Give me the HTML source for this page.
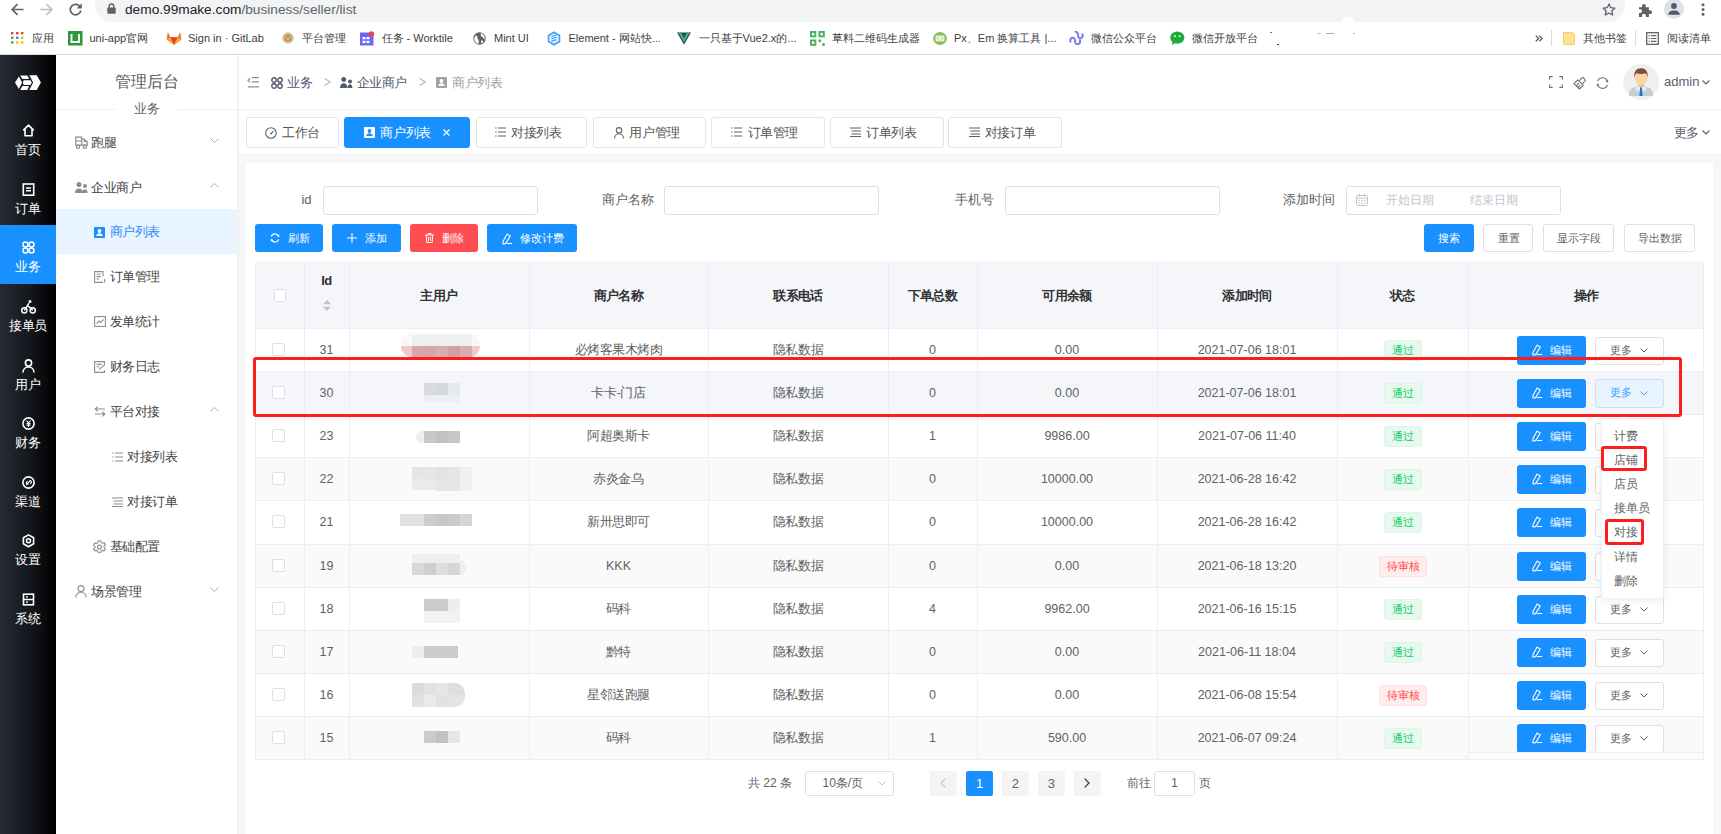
<!DOCTYPE html>
<html><head><meta charset="utf-8">
<style>
*{box-sizing:border-box;margin:0;padding:0}
html,body{width:1721px;height:834px;overflow:hidden;background:#fff;font-family:"Liberation Sans",sans-serif;color:#606266;font-size:13px}
.a{position:absolute}
svg{display:block}
/* chrome */
#top{left:0;top:0;width:1721px;height:22px;background:#fff}
#addr{left:95px;top:-10px;width:1530px;height:32px;background:#f1f3f4;border-radius:16px}
#url{left:125px;top:1px;font-size:13.7px;color:#202124;white-space:nowrap;line-height:18px}
#url span{color:#5f6368}
#bm{left:0;top:22px;width:1721px;height:33px;background:#fff;border-bottom:1px solid #dadce0}
.bmt{position:absolute;top:9px;font-size:11px;line-height:14px;color:#3c4043;white-space:nowrap}
/* dark sidebar */
#side1{left:0;top:55px;width:56px;height:779px;background:linear-gradient(90deg,#272b36 0%,#14161c 55%,#000 100%)}
.m1{position:absolute;left:0;width:56px;height:59px;color:#fff;text-align:center}
.m1 svg{position:absolute;left:22px;top:16px}
.m1 .t{position:absolute;left:0;width:56px;top:34px;font-size:13px;line-height:15px;letter-spacing:-0.45px;text-indent:-0.45px}
.m1.on{background:#1890ff}
/* sidebar 2 */
#side2{left:56px;top:55px;width:182px;height:779px;background:#fff;border-right:1px solid #eff0f2;box-shadow:1px 0 3px rgba(0,0,0,.035);z-index:2}
.m2{position:absolute;left:0;width:181px;height:45px;font-size:13px;letter-spacing:-0.5px;color:#444;line-height:45px;white-space:nowrap}
.m2 .ic{position:absolute;top:16px}
.m2 .tx{position:absolute}
.m2 .chev{position:absolute;left:153.5px;top:18px}
.m2.on{background:#e8f4ff;color:#2b8cf5}
/* main */
#hdr{left:238px;top:55px;width:1483px;height:55px;background:#fff;border-bottom:1px solid #f0f0f0}
#tabs{left:238px;top:110px;width:1483px;height:44px;background:#fff}
.tab{position:absolute;top:7.3px;height:30.5px;border:1px solid #e1e4e8;border-radius:3px;background:#fff;font-size:13px;color:#555;line-height:30px;letter-spacing:-0.4px;white-space:nowrap}

.tab .tx{position:absolute;top:0}
.bc{top:17.8px;font-size:13px;line-height:20px;letter-spacing:-0.55px;white-space:nowrap}
.tab.on{background:#1890ff;border-color:#1890ff;color:#fff}
#gray{left:238px;top:154px;width:1483px;height:680px;background:#f5f7f9;border-top:1px solid #eceef1}
#card{left:246px;top:163px;width:1467px;height:680px;background:#fff}

.lbl{top:192px;font-size:13px;line-height:16px;text-align:right;color:#606266;white-space:nowrap}
.inp{top:186px;height:29px;border:1px solid #dcdfe6;border-radius:3px;background:#fff}
.ph{top:192px;font-size:12px;line-height:16px;color:#c0c4cc;white-space:nowrap}
.btn{top:223.8px;height:28.4px;border-radius:3px;font-size:11px;white-space:nowrap}
.btn .bt{top:0;line-height:28.2px}
.btn.pri{background:#1890ff;color:#fff}
.btn.dan{background:#ff4d51;color:#fff}
.btn.def{background:#fff;border:1px solid #dcdfe6;color:#606266}
.btn.def .bt{line-height:26px;margin-left:-1px}
.hl{left:255px;width:1449px;height:1px;background:#ebeef5}
.vl{top:262px;width:1px;height:498px;background:#ebeef5}
.th{font-size:13px;letter-spacing:-0.6px;font-weight:bold;color:#303133;text-align:center;line-height:20px;white-space:nowrap}
.tdc{letter-spacing:-0.45px;font-size:13px!important}
.td{font-size:12.5px;color:#606266;text-align:center;line-height:20px;white-space:nowrap}
.cb{width:12.6px;height:12.6px;border:1px solid #dcdfe6;border-radius:2px;background:#fff}
.tag{height:21px;border-radius:3px;font-size:11px;line-height:19px;text-align:center;border:1px solid}
.tag.ok{background:#e7f8ee;border-color:#dcf5e6;color:#13ce66}
.tag.wait{background:#ffeded;border-color:#ffe0e0;color:#ff4949}
.more{width:68.5px;height:28.5px;border:1px solid #dcdfe6;border-radius:3px;background:#fff;font-size:11px;line-height:25px;color:#606266;padding-left:13.5px}
.more.hov{background:#e8f3fe;border-color:#c4e0fd;color:#409eff}

.dd{font-size:12px;line-height:16px;color:#606266;white-space:nowrap}
.pg{font-size:12px;line-height:16px;color:#606266;white-space:nowrap}
.pgb{top:770.5px;width:27px;height:25.5px;border-radius:2px;font-size:13px;line-height:25.5px;text-align:center}
</style></head>
<body>
<!-- browser chrome -->
<div id="top" class="a"></div>
<div id="addr" class="a"></div>
<div class="a" style="left:1341px;top:17px;width:13px;height:10px;border-radius:50%;background:#fff"></div>
<div id="url" class="a">demo.99make.com<span>/business/seller/list</span></div>
<div id="bm" class="a"></div>
<div id="bmw" class="a" style="left:0;top:22px">
<div class="bmt" style="left:32px">应用</div>
<div class="bmt" style="left:89.5px">uni-app官网</div>
<div class="bmt" style="left:188px">Sign in · GitLab</div>
<div class="bmt" style="left:302px">平台管理</div>
<div class="bmt" style="left:381.5px">任务 - Worktile</div>
<div class="bmt" style="left:494px">Mint UI</div>
<div class="bmt" style="left:568.5px">Element - 网站快...</div>
<div class="bmt" style="left:698.5px">一只基于Vue2.x的...</div>
<div class="bmt" style="left:832px">草料二维码生成器</div>
<div class="bmt" style="left:954px">Px、Em 换算工具 |...</div>
<div class="bmt" style="left:1091px">微信公众平台</div>
<div class="bmt" style="left:1191.5px">微信开放平台</div>
<div class="bmt" style="left:1582.5px">其他书签</div>
<div class="bmt" style="left:1666.5px">阅读清单</div>
</div>


<!-- toolbar icons -->
<svg class="a" style="left:10px;top:2px" width="15" height="15" viewBox="0 0 15 15"><path d="M13.5 7.5H2.5M7.5 2.2L2.2 7.5l5.3 5.3" fill="none" stroke="#5f6368" stroke-width="1.7"/></svg>
<svg class="a" style="left:39px;top:2px" width="15" height="15" viewBox="0 0 15 15"><path d="M1.5 7.5h11M7.5 2.2l5.3 5.3-5.3 5.3" fill="none" stroke="#bdc1c6" stroke-width="1.7"/></svg>
<svg class="a" style="left:68px;top:2px" width="15" height="15" viewBox="0 0 15 15"><path d="M12.3 5.2A5.3 5.3 0 1 0 12.8 8.5" fill="none" stroke="#5f6368" stroke-width="1.7"/><path d="M13.8 1.2v5.3H8.5z" fill="#5f6368"/></svg>
<svg class="a" style="left:107px;top:3px" width="9" height="11" viewBox="0 0 9 11"><rect x="0.3" y="4.6" width="8.4" height="6.2" rx="1" fill="#5f6368"/><path d="M2.2 5V3.3a2.3 2.3 0 0 1 4.6 0V5" fill="none" stroke="#5f6368" stroke-width="1.4"/></svg>
<svg class="a" style="left:1602px;top:3px" width="14" height="13" viewBox="0 0 14 13"><path d="M7 .9l1.75 3.8 4.1.45-3.05 2.8.85 4.05L7 9.95 3.35 12l.85-4.05-3.05-2.8 4.1-.45z" fill="none" stroke="#5f6368" stroke-width="1.3" stroke-linejoin="round"/></svg>
<svg class="a" style="left:1638px;top:2.5px" width="14" height="14" viewBox="0 0 14 14"><path d="M1 4.3h3V3a1.9 1.9 0 0 1 3.8 0v1.3h3.1v3h1.2a1.9 1.9 0 0 1 0 3.8h-1.2v2.8H7.8v-1.2a1.9 1.9 0 0 0-3.8 0v1.2H1V10h1.2a1.9 1.9 0 0 0 0-3.8H1z" fill="#5f6368"/></svg>
<div class="a" style="left:1664px;top:-1px;width:20px;height:20px;border-radius:50%;background:#dee1e6"></div>
<svg class="a" style="left:1667px;top:3px" width="14" height="12" viewBox="0 0 14 12"><circle cx="7" cy="3" r="2.9" fill="#4f5b6e"/><path d="M1.2 11.8c0-3 2.8-4.4 5.8-4.4s5.8 1.4 5.8 4.4z" fill="#4f5b6e"/></svg>
<svg class="a" style="left:1701px;top:3px" width="4" height="13" viewBox="0 0 4 13"><circle cx="2" cy="1.8" r="1.5" fill="#5f6368"/><circle cx="2" cy="6.5" r="1.5" fill="#5f6368"/><circle cx="2" cy="11.2" r="1.5" fill="#5f6368"/></svg>
<!-- bookmark icons -->
<svg class="a" style="left:11px;top:31.5px" width="13" height="12" viewBox="0 0 13 12"><g><rect x="0" y="0" width="2.4" height="2.4" fill="#ea4335"/><rect x="5" y="0" width="2.4" height="2.4" fill="#ea4335"/><rect x="10" y="0" width="2.4" height="2.4" fill="#ea4335"/><rect x="0" y="4.6" width="2.4" height="2.4" fill="#34a853"/><rect x="5" y="4.6" width="2.4" height="2.4" fill="#4285f4"/><rect x="10" y="4.6" width="2.4" height="2.4" fill="#fbbc04"/><rect x="0" y="9.2" width="2.4" height="2.4" fill="#34a853"/><rect x="5" y="9.2" width="2.4" height="2.4" fill="#fbbc04"/><rect x="10" y="9.2" width="2.4" height="2.4" fill="#fbbc04"/></g></svg>
<svg class="a" style="left:68px;top:30.5px" width="15" height="15" viewBox="0 0 15 15"><rect width="14.5" height="14.5" fill="#2b9939"/><path d="M3.5 3v8h7.5V3" fill="none" stroke="#fff" stroke-width="1.9"/></svg>
<svg class="a" style="left:166px;top:31px" width="16" height="14" viewBox="0 0 16 14"><path d="M8 13.8L.6 8.4 1.9 1l2.4 5.2h7.4L14.1 1l1.3 7.4z" fill="#fc6d26"/><path d="M8 13.8L4.3 6.2h7.4z" fill="#e24329"/><path d="M.6 8.4L4.3 6.2 8 13.8zM15.4 8.4l-3.7-2.2L8 13.8z" fill="#fca326"/></svg>
<svg class="a" style="left:282px;top:32px" width="12" height="12" viewBox="0 0 12 12"><circle cx="6" cy="6" r="5.8" fill="#d9c39a"/><circle cx="6" cy="6" r="3.6" fill="#b8904e"/><path d="M3.8 4.6l2.2 3 2.2-3" fill="none" stroke="#f3e3b8" stroke-width="1"/></svg>
<svg class="a" style="left:360px;top:30.5px" width="15" height="15" viewBox="0 0 15 15"><rect x="0" y="1.5" width="13.5" height="13" fill="#6b67f4"/><rect x="2.5" y="6" width="3" height="2.3" fill="#fff"/><rect x="6.5" y="6" width="3" height="2.3" fill="#fff"/><rect x="2.5" y="9.8" width="3" height="2.3" fill="#fff"/><rect x="6.5" y="9.8" width="3" height="2.3" fill="#fff"/><circle cx="11.5" cy="2.8" r="2.6" fill="#f0413f"/></svg>
<svg class="a" style="left:473px;top:31.5px" width="13" height="13" viewBox="0 0 13 13"><circle cx="6.5" cy="6.5" r="6.2" fill="#5f6368"/><path d="M2.3 3.6c1.6.2 2.4 1.2 2.2 2.5-.2 1 .7 1.5 1.2 2.4.4.8-.3 2-.1 3.6-2.6-.6-4.2-2.6-4.4-5zM8 1c.2 1.2-.4 1.7-.2 2.7.3 1 1.6.9 2.4 1.8.7.7.4 1.6 1.8 1.9 0-2.6-1.6-5.4-4-6.4zM8.2 8.6c.9-.2 1.7.2 2.3 1.1-.6.7-1.3 1.3-2.3 1.7.3-1-.6-1.6 0-2.8z" fill="#fff"/></svg>
<svg class="a" style="left:547px;top:31px" width="14" height="15" viewBox="0 0 14 15"><path d="M7 .3l6.3 3.6v7.2L7 14.7.7 11.1V3.9z" fill="#409eff"/><path d="M7 2.2l4.7 2.7v5.2L7 12.8 2.3 10.1V4.9z" fill="#dbeeff"/><path d="M4.5 5.5l4.8-1.5M4.5 7.8l4.8-1.5M4.5 10.1l4.8-1.5" stroke="#409eff" stroke-width="1.2"/></svg>
<svg class="a" style="left:677px;top:31.5px" width="14" height="13" viewBox="0 0 14 13"><path d="M0 .5h14L7 12.8z" fill="#35495e"/><path d="M2.6 .5L7 8.2 11.4.5" fill="none" stroke="#41b883" stroke-width="2"/><path d="M4.7 .8h4.6L7 4.7z" fill="#fff" opacity=".0"/></svg>
<svg class="a" style="left:810px;top:31px" width="15" height="15" viewBox="0 0 15 15"><g fill="#41b35d"><rect x="0" y="0" width="6.3" height="6.3"/><rect x="8.5" y="0" width="6.3" height="6.3"/><rect x="0" y="8.5" width="6.3" height="6.3"/><rect x="8.5" y="8.5" width="2.6" height="2.6"/><rect x="12.2" y="12.2" width="2.6" height="2.6"/></g><g fill="#fff"><rect x="1.9" y="1.9" width="2.5" height="2.5"/><rect x="10.4" y="1.9" width="2.5" height="2.5"/><rect x="1.9" y="10.4" width="2.5" height="2.5"/></g></svg>
<svg class="a" style="left:933px;top:31.5px" width="14" height="13" viewBox="0 0 14 13"><ellipse cx="7" cy="6.5" rx="6.9" ry="6.4" fill="#87c05a"/><rect x="2.6" y="3.6" width="8.8" height="5.8" rx="1" fill="#e8f3dc"/><path d="M5.5 5.3l-1.2 1.2 1.2 1.2M8.5 5.3l1.2 1.2-1.2 1.2" fill="none" stroke="#87c05a" stroke-width=".8"/></svg>
<svg class="a" style="left:1069px;top:31px" width="15" height="14" viewBox="0 0 15 14"><path d="M2 11.2c-1.4-1.3-.8-3.8 1.2-4.4 1.3-.4 2.4.4 2.6 1.9l.4 2.5c.3 1.6 1.7 2.4 3.1 1.9 2-.7 2.5-3.2 1-4.6" fill="none" stroke="#7b7bf2" stroke-width="2"/><path d="M13 2.8c1.4 1.3.8 3.8-1.2 4.4-1.3.4-2.4-.4-2.6-1.9L8.8 2.8C8.5 1.2 7.1.4 5.7.9" fill="none" stroke="#7b7bf2" stroke-width="2"/></svg>
<svg class="a" style="left:1170px;top:31px" width="15" height="15" viewBox="0 0 15 15"><ellipse cx="7.3" cy="6.6" rx="7.1" ry="6.1" fill="#1fab3a"/><path d="M2.5 10.8l-.6 3.3 3.6-2.1z" fill="#1fab3a"/><circle cx="5" cy="5.2" r=".9" fill="#fff"/><circle cx="9.6" cy="5.2" r=".9" fill="#fff"/></svg>
<svg class="a" style="left:1534.5px;top:35px" width="8" height="7" viewBox="0 0 8 7"><path d="M.8.8l2.8 2.7L.8 6.2M4.3.8l2.8 2.7-2.8 2.7" fill="none" stroke="#5f6368" stroke-width="1.4"/></svg>
<div class="a" style="left:1551px;top:30px;width:1px;height:16px;background:#dadce0"></div>
<svg class="a" style="left:1563px;top:31.5px" width="12" height="13" viewBox="0 0 12 13"><path d="M.5 .5h9l2 2v10H.5z" fill="#fde293" stroke="#f2c94c" stroke-width=".8"/></svg>
<div class="a" style="left:1635px;top:30px;width:1px;height:16px;background:#dadce0"></div>
<svg class="a" style="left:1645.5px;top:31.5px" width="13" height="13" viewBox="0 0 13 13"><rect x=".7" y=".7" width="11.6" height="11.6" fill="none" stroke="#5f6368" stroke-width="1.3"/><path d="M2.6 3.7h1.2M5 3.7h5.4M2.6 6.5h1.2M5 6.5h5.4M2.6 9.3h1.2M5 9.3h5.4" stroke="#5f6368" stroke-width="1.2"/></svg>

<div class="a" style="left:1270px;top:32px;width:2px;height:1px;background:#777"></div><div class="a" style="left:1277px;top:44px;width:2px;height:1px;background:#444"></div><div class="a" style="left:1325.5px;top:33px;width:8px;height:1px;background:#aaa"></div><div class="a" style="left:1317px;top:33px;width:4px;height:1px;background:#c8c8d0"></div><div class="a" style="left:1353px;top:33px;width:2px;height:1px;background:#d9a0c0"></div>
<!-- dark side -->

<div id="side1" class="a">
<svg class="a" style="left:14.6px;top:20px" width="27" height="16" viewBox="0 0 27 16"><g fill="#fff"><path d="M0 7.6L3.9 1.4 7.1 7.6 3.9 14z"/><path d="M5.2.4h7.2l1.8 3.7H7.4z"/><path d="M8.6 5.2h6.9l1.3 2.35-1.3 2.35H8.6L7.9 7.55z"/><path d="M7.4 11h6.8l-1.8 3.9H5.2z"/><path d="M14.3.2h7.5l4.1 7.35-4.1 7.35h-7.5l3.8-7.35z"/></g></svg>
<div class="m1" style="top:53.2px"><svg width="13" height="13" viewBox="0 0 13 13" style="left:21.5px"><path d="M1.2 6.3L6.5 1.2l5.3 5.1M3 5v6.8h7V5" fill="none" stroke="#fff" stroke-width="1.6" stroke-linejoin="round"/></svg><div class="t">首页</div></div>
<div class="m1" style="top:111.8px"><svg width="13" height="13" viewBox="0 0 13 13" style="left:21.5px"><rect x="1.3" y="1" width="10.4" height="11.2" fill="none" stroke="#fff" stroke-width="1.6"/><path d="M4 5h5M4 7.8h5" stroke="#fff" stroke-width="1.4"/></svg><div class="t">订单</div></div>
<div class="m1 on" style="top:170.4px"><svg width="13" height="13" viewBox="0 0 13 13" style="left:21.5px"><g fill="none" stroke="#fff" stroke-width="1.5"><circle cx="3.5" cy="3.5" r="2.5"/><circle cx="9.5" cy="3.5" r="2.5"/><circle cx="3.5" cy="9.5" r="2.5"/><circle cx="9.5" cy="9.5" r="2.5"/></g></svg><div class="t">业务</div></div>
<div class="m1" style="top:229px"><svg width="15" height="14" viewBox="0 0 15 14" style="left:20.5px"><g fill="none" stroke="#fff" stroke-width="1.5"><circle cx="3.3" cy="10.3" r="2.6"/><circle cx="11.7" cy="10.3" r="2.6"/><path d="M3.3 10.3l3-4.6 3.2 2.2 2.2 2.4M6.3 5.7L8 3.2"/></g><circle cx="9" cy="1.6" r="1.5" fill="#fff"/></svg><div class="t">接单员</div></div>
<div class="m1" style="top:287.6px"><svg width="13" height="14" viewBox="0 0 13 14" style="left:21.5px"><g fill="none" stroke="#fff" stroke-width="1.6"><circle cx="6.5" cy="4" r="3.1"/><path d="M1 13.5c0-3.3 2.5-5.5 5.5-5.5s5.5 2.2 5.5 5.5"/></g></svg><div class="t">用户</div></div>
<div class="m1" style="top:346.2px"><svg width="13" height="13" viewBox="0 0 13 13" style="left:21.5px"><circle cx="6.5" cy="6.5" r="5.6" fill="none" stroke="#fff" stroke-width="1.6"/><path d="M4.5 3.5l2 2.4 2-2.4M6.5 5.9v4M4.5 6.6h4M4.5 8.3h4" fill="none" stroke="#fff" stroke-width="1.1"/></svg><div class="t">财务</div></div>
<div class="m1" style="top:404.8px"><svg width="13" height="13" viewBox="0 0 13 13" style="left:21.5px"><circle cx="6.5" cy="6.5" r="5.6" fill="none" stroke="#fff" stroke-width="1.6"/><path d="M4.2 8.8l4.6-4.6M5.6 5.2l-.9.9a1.2 1.2 0 0 0 1.7 1.7M7.4 5.2a1.2 1.2 0 0 1 1.7 1.7l-.9.9" fill="none" stroke="#fff" stroke-width="1.1"/></svg><div class="t">渠道</div></div>
<div class="m1" style="top:463.4px"><svg width="13" height="14" viewBox="0 0 13 14" style="left:21.5px"><path d="M6.5 .9l5.1 2.9v6L6.5 12.8 1.4 9.8v-6z" fill="none" stroke="#fff" stroke-width="1.6" stroke-linejoin="round"/><circle cx="6.5" cy="6.8" r="2" fill="none" stroke="#fff" stroke-width="1.5"/></svg><div class="t">设置</div></div>
<div class="m1" style="top:522px"><svg width="13" height="13" viewBox="0 0 13 13" style="left:21.5px"><rect x="1.5" y="1.2" width="10" height="10.6" fill="none" stroke="#fff" stroke-width="1.6"/><path d="M1.5 6.5h10M4 3.9h2M4 9.1h2" stroke="#fff" stroke-width="1.4"/></svg><div class="t">系统</div></div>
</div>
<div id="side2" class="a">
<div class="a" style="left:56px;top:17px;width:70px;height:20px;line-height:20px;text-align:center;font-size:16px;color:#5b5b5b">管理后台</div>
<div class="a" style="left:0;top:54px;width:181px;height:1px;background:#eceff3"></div>
<div class="a" style="left:60px;top:46px;width:61px;height:16px;background:#fff;text-align:center;font-size:13px;line-height:16px;color:#666">业务</div>
<div class="m2 " style="top:64.5px"><div class="ic" style="top:16.5px;left:19.0px"><svg width="13" height="13" viewBox="0 0 13 13"><g fill="none" stroke="#8a8d93" stroke-width="1.2"><path d="M.8 1.2h6v8H.8zM.8 5h6M6.8 3h2.6l1.6 2.4h1.2v3.8H6.8M9.4 3v2.4h1.6"/></g><g fill="#fff" stroke="#8a8d93" stroke-width="1.2"><circle cx="3" cy="10.8" r="1.6"/><circle cx="10" cy="10.8" r="1.6"/></g></svg></div><div class="tx" style="left:35.3px">跑腿</div><svg class="chev" width="9" height="5" viewBox="0 0 9 5"><path d="M.5.5l4 4 4-4" fill="none" stroke="#a8abb2" stroke-width="1"/></svg></div>
<div class="m2 " style="top:109.5px"><div class="ic" style="top:17.5px;left:19.0px"><svg width="13" height="11" viewBox="0 0 13 11"><g fill="#8a8d93"><circle cx="4" cy="2.6" r="2.5"/><path d="M0 11c0-3.2 1.6-4.6 4-4.6s4 1.4 4 4.6z"/><circle cx="10" cy="4" r="2"/><path d="M7.4 11c.1-2.6 1.1-3.7 2.6-3.7s2.5 1.1 2.6 3.7z"/></g></svg></div><div class="tx" style="left:35.3px">企业商户</div><svg class="chev" width="9" height="5" viewBox="0 0 9 5"><path d="M.5 4.5l4-4 4 4" fill="none" stroke="#a8abb2" stroke-width="1"/></svg></div>
<div class="m2 on" style="top:154.0px"><div class="ic" style="top:17.5px;left:38.0px"><svg width="11" height="11" viewBox="0 0 11 11"><rect width="11" height="11" rx="1" fill="#1890ff"/><circle cx="5.5" cy="4" r="1.9" fill="#fff"/><path d="M2.2 9c.3-1.9 1.6-2.8 3.3-2.8s3 .9 3.3 2.8z" fill="#fff"/></svg></div><div class="tx" style="left:53.8px">商户列表</div></div>
<div class="m2 " style="top:198.8px"><div class="ic" style="top:17.0px;left:38.0px"><svg width="12" height="12" viewBox="0 0 12 12"><g fill="none" stroke="#8a8d93" stroke-width="1.1"><path d="M9 5.5V.6H.6v10.8H9"/><path d="M2.6 3.2h4.2M2.6 5.6h4.2M2.6 8h2.5M10.6 8v3.4"/></g></svg></div><div class="tx" style="left:53.8px">订单管理</div></div>
<div class="m2 " style="top:243.7px"><div class="ic" style="top:17.5px;left:38.0px"><svg width="12" height="11" viewBox="0 0 12 11"><g fill="none" stroke="#8a8d93" stroke-width="1.1"><rect x=".6" y=".6" width="10.8" height="9.8"/><path d="M2.6 7.6l2.4-2.6 1.8 1.4 2.8-3"/></g></svg></div><div class="tx" style="left:53.8px">发单统计</div></div>
<div class="m2 " style="top:288.6px"><div class="ic" style="top:17.0px;left:38.0px"><svg width="12" height="12" viewBox="0 0 12 12"><g fill="none" stroke="#8a8d93" stroke-width="1.1"><path d="M10.4 4V.6H.6v10.8h9.8V9"/><path d="M2.6 3.4h5M2.6 5.8h3M5 8.6l5.6-4.8"/></g></svg></div><div class="tx" style="left:53.8px">财务日志</div></div>
<div class="m2 " style="top:333.7px"><div class="ic" style="top:17.5px;left:38.0px"><svg width="12" height="11" viewBox="0 0 12 11"><g fill="none" stroke="#8a8d93" stroke-width="1.1"><path d="M11 3H1.5M3.8.6L1.2 3l2.6 2.4M1 8h9.5M8.2 5.6L10.8 8l-2.6 2.4"/></g></svg></div><div class="tx" style="left:53.8px">平台对接</div><svg class="chev" width="9" height="5" viewBox="0 0 9 5"><path d="M.5 4.5l4-4 4 4" fill="none" stroke="#a8abb2" stroke-width="1"/></svg></div>
<div class="m2 " style="top:378.7px"><div class="ic" style="top:18.0px;left:55.6px"><svg width="11" height="10" viewBox="0 0 11 10"><g stroke="#8a8d93" stroke-width="1.1"><path d="M3 1h8M3 5h8M3 9h8M.3 1h1.2M.3 5h1.2M.3 9h1.2"/></g></svg></div><div class="tx" style="left:71.0px">对接列表</div></div>
<div class="m2 " style="top:423.5px"><div class="ic" style="top:18.0px;left:55.6px"><svg width="11" height="10" viewBox="0 0 11 10"><g stroke="#8a8d93" stroke-width="1.1"><path d="M0 1h11M1.5 4h9.5M1.5 7h9.5M0 9.5h11"/></g></svg></div><div class="tx" style="left:71.0px">对接订单</div></div>
<div class="m2 " style="top:468.5px"><div class="ic" style="top:16.5px;left:37.3px"><svg width="13" height="13" viewBox="0 0 13 13"><g fill="none" stroke="#8a8d93" stroke-width="1.1"><path d="M5.3.7h2.4l.4 1.7 1.4.8 1.7-.5 1.2 2.1-1.3 1.2v1.6l1.3 1.2-1.2 2.1-1.7-.5-1.4.8-.4 1.7H5.3l-.4-1.7-1.4-.8-1.7.5L.6 9.1 1.9 7.9V6.3L.6 5.1l1.2-2.1 1.7.5 1.4-.8z"/><circle cx="6.5" cy="7.1" r="2"/></g></svg></div><div class="tx" style="left:53.5px">基础配置</div></div>
<div class="m2 " style="top:513.5px"><div class="ic" style="top:16.5px;left:19.0px"><svg width="12" height="13" viewBox="0 0 12 13"><g fill="none" stroke="#8a8d93" stroke-width="1.1"><circle cx="6" cy="3.6" r="3"/><path d="M.8 12.6c0-3.2 2.3-5.4 5.2-5.4s5.2 2.2 5.2 5.4"/></g></svg></div><div class="tx" style="left:35.3px">场景管理</div><svg class="chev" width="9" height="5" viewBox="0 0 9 5"><path d="M.5.5l4 4 4-4" fill="none" stroke="#a8abb2" stroke-width="1"/></svg></div>
</div>


<div id="hdr" class="a">
<svg class="a" style="left:8.5px;top:21.5px" width="12" height="11" viewBox="0 0 12 11"><path d="M3.2 1.2L.9 3.3l2.3 2.1" fill="none" stroke="#8f8f8f" stroke-width="1.2"/><path d="M5 .7h7M5 4.8h7M.8 9.8H12" stroke="#8f8f8f" stroke-width="1.3"/></svg>
<svg class="a" style="left:32.5px;top:21.5px" width="12" height="12" viewBox="0 0 12 12"><g fill="none" stroke="#515a6e" stroke-width="1.4"><circle cx="3" cy="3" r="2.2"/><circle cx="9" cy="3" r="2.2"/><circle cx="3" cy="9" r="2.2"/><circle cx="9" cy="9" r="2.2"/></g></svg>
<div class="a bc" style="left:49.4px;color:#515a6e">业务</div>
<svg class="a" style="left:86px;top:23px" width="7" height="8" viewBox="0 0 7 8"><path d="M.6.6L6.2 4 .6 7.4" fill="none" stroke="#b4b9c3" stroke-width="1.2"/></svg>
<svg class="a" style="left:102px;top:21.8px" width="13" height="11" viewBox="0 0 13 11"><g fill="#515a6e"><circle cx="3.7" cy="2.5" r="2.4"/><path d="M0 11c0-3.3 1.5-4.8 3.7-4.8s3.7 1.5 3.7 4.8z"/><circle cx="10" cy="4.4" r="2"/><path d="M7.6 11c.1-2.6 1-3.7 2.4-3.7s2.3 1.1 2.4 3.7z"/></g></svg>
<div class="a bc" style="left:119px;color:#515a6e">企业商户</div>
<svg class="a" style="left:181px;top:23px" width="7" height="8" viewBox="0 0 7 8"><path d="M.6.6L6.2 4 .6 7.4" fill="none" stroke="#b4b9c3" stroke-width="1.2"/></svg>
<svg class="a" style="left:198.2px;top:22.2px" width="11" height="11" viewBox="0 0 11 11"><rect width="11" height="11" rx="1" fill="#a3a3a3"/><circle cx="5.5" cy="4" r="1.9" fill="#fff"/><path d="M2.2 9c.3-1.9 1.6-2.8 3.3-2.8s3 .9 3.3 2.8z" fill="#fff"/></svg>
<div class="a bc" style="left:214.4px;color:#9aa1ab">商户列表</div>
<svg class="a" style="left:1311px;top:21px" width="14" height="12" viewBox="0 0 14 12"><path d="M.7 3.6V.7h3M10.3 .7h3v2.9M13.3 8.4v2.9h-3M3.7 11.3h-3V8.4" fill="none" stroke="#707379" stroke-width="1.2"/></svg>
<svg class="a" style="left:1334.5px;top:20.5px" width="14" height="14" viewBox="0 0 14 14"><g fill="none" stroke="#707379" stroke-width="1.15" stroke-linejoin="round"><path d="M1 7.6L4.8 3.8 10.2 9.2 6.4 13z"/><path d="M3.3 9.9L6 7.2M5 11.6l2.2-2.2"/><path d="M6.3 4.6L8.8 2.1c.6-.6 1.3-.6 1.9 0l1.2 1.2c.6.6.6 1.3 0 1.9L9.4 7.7"/></g></svg>
<svg class="a" style="left:1358px;top:21.5px" width="13" height="12" viewBox="0 0 13 12"><path d="M11.4 4.3A5.2 5.2 0 0 0 1.6 4.1M1.5 7.7a5.2 5.2 0 0 0 9.9.2" fill="none" stroke="#707379" stroke-width="1.15"/><path d="M12.3 2.4l-.3 3-2.7-1.1zM.6 9.5l.4-3 2.7 1.2z" fill="#707379"/></svg>
<div class="a" style="left:1385px;top:9px;width:36px;height:36px;border-radius:50%;background:#efefef;overflow:hidden">
<svg width="36" height="36" viewBox="0 0 36 36"><path d="M5.8 32c.3-4.6 1.5-7.2 4.6-8.4l4.6-1.9h6l4.6 1.9c3.1 1.2 4.3 3.8 4.6 8.4z" fill="#c3cdd5"/><path d="M15 21.8l3 10.2 3-10.2z" fill="#f4f7f9"/><path d="M17.1 23.2h1.8l.7 8.8h-3.2z" fill="#1b76d1"/><path d="M11.5 23.5l3.8 5 1-6.5zM24.5 23.5l-3.8 5-1-6.5z" fill="#e6ebef"/><rect x="15" y="18" width="6" height="5" fill="#f1c392"/><ellipse cx="18" cy="13.6" rx="6.4" ry="7.3" fill="#fcd5a5"/><path d="M11.4 13.6C10.6 7.6 13.4 4.3 18 4.3s7.4 3.3 6.6 9.3c-.5-2.4-1.2-3.9-2.2-4.4-2 .9-6.6.9-8.8 0-1 .5-1.7 2-2.2 4.4z" fill="#7b5139"/></svg>
</div>
<div class="a" style="left:1426px;top:17px;font-size:13px;line-height:20px;color:#5a5e66">admin</div>
<svg class="a" style="left:1464px;top:24.5px" width="8" height="5" viewBox="0 0 8 5"><path d="M.5.5L4 4 7.5.5" fill="none" stroke="#5a5e66" stroke-width="1.1"/></svg>
</div>
<div id="tabs" class="a">
<div class="tab" style="left:8.3px;width:92.4px"><div class="a" style="left:18.2px;top:8.5px"><svg width="12" height="12" viewBox="0 0 12 12"><g fill="none" stroke="#606266" stroke-width="1.1"><circle cx="6" cy="6" r="5.3"/><path d="M6 6.8l2.5-3"/></g><circle cx="6" cy="6.6" r=".9" fill="#606266"/></svg></div><div class="tx" style="left:35.0px">工作台</div></div>
<div class="tab on" style="left:105.9px;width:126.1px"><div class="a" style="left:19.1px;top:8.5px"><svg width="11" height="11" viewBox="0 0 11 11"><rect width="11" height="11" rx="1" fill="#fff"/><circle cx="5.5" cy="4" r="1.9" fill="#1890ff"/><path d="M2.2 9c.3-1.9 1.6-2.8 3.3-2.8s3 .9 3.3 2.8z" fill="#1890ff"/></svg></div><div class="tx" style="left:35.6px">商户列表</div><svg class="a" style="left:98.6px;top:11px" width="7" height="7" viewBox="0 0 7 7"><path d="M.5.5l6 6M6.5.5l-6 6" stroke="#fff" stroke-width="1.1"/></svg></div>
<div class="tab" style="left:237.5px;width:111.9px"><div class="a" style="left:18.5px;top:8.5px"><svg width="11" height="10" viewBox="0 0 11 10"><g stroke="#606266" stroke-width="1.1"><path d="M3 1h8M3 5h8M3 9h8M.2 1h1.4M.2 5h1.4M.2 9h1.4"/></g></svg></div><div class="tx" style="left:34.5px">对接列表</div></div>
<div class="tab" style="left:354.6px;width:113.9px"><div class="a" style="left:20.4px;top:8.5px"><svg width="10" height="12" viewBox="0 0 10 12"><g fill="none" stroke="#606266" stroke-width="1.1"><circle cx="5" cy="3.3" r="2.7"/><path d="M.6 11.6c0-2.9 2-4.8 4.4-4.8s4.4 1.9 4.4 4.8"/></g></svg></div><div class="tx" style="left:35.9px">用户管理</div></div>
<div class="tab" style="left:473.2px;width:113.7px"><div class="a" style="left:19.3px;top:8.5px"><svg width="11" height="10" viewBox="0 0 11 10"><g stroke="#606266" stroke-width="1.1"><path d="M3 1h8M3 5h8M3 9h8M.2 1h1.4M.2 5h1.4M.2 9h1.4"/></g></svg></div><div class="tx" style="left:35.5px">订单管理</div></div>
<div class="tab" style="left:591.5px;width:114.0px"><div class="a" style="left:19.5px;top:8.5px"><svg width="11" height="10" viewBox="0 0 11 10"><g stroke="#606266" stroke-width="1.1"><path d="M0 1h11M1.5 4h9.5M1.5 7h9.5M0 9.5h11"/></g></svg></div><div class="tx" style="left:35.8px">订单列表</div></div>
<div class="tab" style="left:710.4px;width:113.6px"><div class="a" style="left:19.2px;top:8.5px"><svg width="11" height="10" viewBox="0 0 11 10"><g stroke="#606266" stroke-width="1.1"><path d="M0 1h11M1.5 4h9.5M1.5 7h9.5M0 9.5h11"/></g></svg></div><div class="tx" style="left:35.5px">对接订单</div></div>
<div class="a" style="left:1435.5px;top:13px;font-size:13px;line-height:20px;color:#5a5e66;letter-spacing:-0.4px">更多</div><svg class="a" style="left:1464px;top:20px" width="8" height="5" viewBox="0 0 8 5"><path d="M.5.5L4 4 7.5.5" fill="none" stroke="#5a5e66" stroke-width="1.1"/></svg></div>

<div id="gray" class="a"></div>
<div id="card" class="a"></div>
<div id="cc" class="a" style="left:0;top:0">
<div class="a lbl" style="left:211.5px;width:100px">id</div>
<div class="a inp" style="left:322.5px;width:215.5px"></div>
<div class="a lbl" style="left:553.5px;width:100px">商户名称</div>
<div class="a inp" style="left:663.5px;width:215.5px"></div>
<div class="a lbl" style="left:894.0px;width:100px">手机号</div>
<div class="a inp" style="left:1004.5px;width:215.5px"></div>
<div class="a lbl" style="left:1235.0px;width:100px">添加时间</div>
<div class="a inp" style="left:1346.0px;width:215.0px"></div>
<svg class="a" style="left:1356px;top:193.5px" width="12" height="12" viewBox="0 0 12 12"><g fill="none" stroke="#c0c4cc" stroke-width="1"><rect x=".5" y="1.5" width="11" height="10" rx="1"/><path d="M.5 4.2h11M3.5 0v2.5M8.5 0v2.5"/></g><g fill="#c0c4cc"><rect x="2.5" y="6" width="1.5" height="1.2"/><rect x="5.2" y="6" width="1.5" height="1.2"/><rect x="8" y="6" width="1.5" height="1.2"/><rect x="2.5" y="8.5" width="1.5" height="1.2"/><rect x="5.2" y="8.5" width="1.5" height="1.2"/><rect x="8" y="8.5" width="1.5" height="1.2"/></g></svg>
<div class="a ph" style="left:1386px">开始日期</div>
<div class="a ph" style="left:1469.5px">结束日期</div>
<div class="a btn pri" style="left:255.0px;width:68.0px"><div class="a" style="left:14.5px;top:9px"><svg width="10" height="10" viewBox="0 0 10 10"><path d="M8.6 3.4A3.9 3.9 0 0 0 1.3 3.6M1.4 6.6a3.9 3.9 0 0 0 7.3-.2" fill="none" stroke="#fff" stroke-width="1.2"/><path d="M9.3 1.3l-.2 2.7-2.5-.9zM.7 8.7l.2-2.7 2.5.9z" fill="#fff"/></svg></div><div class="a bt" style="left:32.5px">刷新</div></div>
<div class="a btn pri" style="left:332.0px;width:69.0px"><div class="a" style="left:14.8px;top:9px"><svg width="10" height="10" viewBox="0 0 10 10"><path d="M5 0v10M0 5h10" stroke="#fff" stroke-width="1.1"/></svg></div><div class="a bt" style="left:32.5px">添加</div></div>
<div class="a btn dan" style="left:410.0px;width:68.0px"><div class="a" style="left:15.0px;top:9px"><svg width="9" height="10" viewBox="0 0 9 10"><g fill="none" stroke="#fff" stroke-width="1"><path d="M0 2h9M3 2V.5h3V2M1.3 2l.5 7.5h5.4L7.7 2M3.5 4v4M5.5 4v4"/></g></svg></div><div class="a bt" style="left:32.0px">删除</div></div>
<div class="a btn pri" style="left:487.3px;width:89.4px"><div class="a" style="left:14.7px;top:9px"><svg width="11" height="12" viewBox="0 0 11 12"><g fill="none" stroke="#fff" stroke-width="1.1" stroke-linejoin="round"><path d="M5.1 1.1L8.3 3 3.6 10.6.9 10.9 1 8.4z"/><path d="M4.8 10.5h5.4"/></g></svg></div><div class="a bt" style="left:32.7px">修改计费</div></div>
<div class="a btn pri" style="left:1424.2px;width:49.8px"><div class="a bt" style="left:14.0px">搜索</div></div>
<div class="a btn def" style="left:1483.3px;width:49.5px"><div class="a bt" style="left:14.4px">重置</div></div>
<div class="a btn def" style="left:1542.5px;width:71.2px"><div class="a bt" style="left:14.3px">显示字段</div></div>
<div class="a btn def" style="left:1623.5px;width:71.2px"><div class="a bt" style="left:14.1px">导出数据</div></div>
<div class="a" style="left:255px;top:262px;width:1449px;height:67px;background:#f4f6fa"></div>
<div class="a" style="left:255px;top:329px;width:1449px;height:42px;background:#fff"></div>
<div class="a" style="left:255px;top:372px;width:1449px;height:42px;background:#f4f6fa"></div>
<div class="a" style="left:255px;top:415px;width:1449px;height:42px;background:#fff"></div>
<div class="a" style="left:255px;top:458px;width:1449px;height:42px;background:#fafafa"></div>
<div class="a" style="left:255px;top:501px;width:1449px;height:42px;background:#fff"></div>
<div class="a" style="left:255px;top:545px;width:1449px;height:42px;background:#fafafa"></div>
<div class="a" style="left:255px;top:588px;width:1449px;height:42px;background:#fff"></div>
<div class="a" style="left:255px;top:631px;width:1449px;height:42px;background:#fafafa"></div>
<div class="a" style="left:255px;top:674px;width:1449px;height:42px;background:#fff"></div>
<div class="a" style="left:255px;top:717px;width:1449px;height:42px;background:#fafafa"></div>
<div class="a hl" style="top:328px"></div>
<div class="a hl" style="top:371px"></div>
<div class="a hl" style="top:414px"></div>
<div class="a hl" style="top:457px"></div>
<div class="a hl" style="top:500px"></div>
<div class="a hl" style="top:544px"></div>
<div class="a hl" style="top:587px"></div>
<div class="a hl" style="top:630px"></div>
<div class="a hl" style="top:673px"></div>
<div class="a hl" style="top:716px"></div>
<div class="a hl" style="top:759px"></div>
<div class="a vl" style="left:304px"></div>
<div class="a vl" style="left:349px"></div>
<div class="a vl" style="left:529px"></div>
<div class="a vl" style="left:708px"></div>
<div class="a vl" style="left:888px"></div>
<div class="a vl" style="left:977px"></div>
<div class="a vl" style="left:1157px"></div>
<div class="a vl" style="left:1337px"></div>
<div class="a vl" style="left:1468px"></div>
<div class="a vl" style="left:255px"></div>
<div class="a vl" style="left:1703px"></div>
<div class="a hl" style="top:262px;background:#f0f2f6"></div>
<div class="a cb" style="left:273.6px;top:289.3px"></div>
<div class="a th" style="left:304px;width:45px;top:271px">Id</div>
<svg class="a" style="left:323px;top:300px" width="8" height="11" viewBox="0 0 8 11"><path d="M4 0L8 4.2H0zM4 11L8 6.8H0z" fill="#c0c4cc"/></svg>
<div class="a th" style="left:349px;width:180px;top:285.5px">主用户</div>
<div class="a th" style="left:529px;width:179px;top:285.5px">商户名称</div>
<div class="a th" style="left:708px;width:180px;top:285.5px">联系电话</div>
<div class="a th" style="left:888px;width:89px;top:285.5px">下单总数</div>
<div class="a th" style="left:977px;width:180px;top:285.5px">可用余额</div>
<div class="a th" style="left:1157px;width:180px;top:285.5px">添加时间</div>
<div class="a th" style="left:1337px;width:131px;top:285.5px">状态</div>
<div class="a th" style="left:1468px;width:236px;top:285.5px">操作</div>
<div class="a cb" style="left:272px;top:343.1px"></div>
<div class="a td" style="left:304px;width:45px;top:340.0px">31</div>
<div class="a td tdc" style="left:529px;width:179px;top:340.0px">必烤客果木烤肉</div>
<div class="a td tdc" style="left:708px;width:180px;top:340.0px">隐私数据</div>
<div class="a td" style="left:888px;width:89px;top:340.0px">0</div>
<div class="a td" style="left:977px;width:180px;top:340.0px">0.00</div>
<div class="a td" style="left:1157px;width:180px;top:340.0px">2021-07-06 18:01</div>
<div class="a tag ok" style="left:1384.3px;top:340.0px;width:37.6px">通过</div>
<div class="a btn pri" style="left:1517.3px;top:336.0px;width:69px;height:29px"><div class="a" style="left:15.2px;top:8.2px"><svg width="11" height="12" viewBox="0 0 11 12"><g fill="none" stroke="#fff" stroke-width="1.1" stroke-linejoin="round"><path d="M5.1 1.1L8.3 3 3.6 10.6.9 10.9 1 8.4z"/><path d="M4.8 10.5h5.4"/></g></svg></div><div class="a bt" style="left:32.4px;line-height:29px">编辑</div></div>
<div class="a more" style="left:1595.4px;top:336.5px">更多<svg class="a" style="left:43.5px;top:10.8px" width="8" height="5" viewBox="0 0 8 5"><path d="M.5.5L4 4 7.5.5" fill="none" stroke="#606266" stroke-width="1"/></svg></div>
<div class="a cb" style="left:272px;top:386.1px"></div>
<div class="a td" style="left:304px;width:45px;top:383.0px">30</div>
<div class="a td tdc" style="left:529px;width:179px;top:383.0px">卡卡-门店</div>
<div class="a td tdc" style="left:708px;width:180px;top:383.0px">隐私数据</div>
<div class="a td" style="left:888px;width:89px;top:383.0px">0</div>
<div class="a td" style="left:977px;width:180px;top:383.0px">0.00</div>
<div class="a td" style="left:1157px;width:180px;top:383.0px">2021-07-06 18:01</div>
<div class="a tag ok" style="left:1384.3px;top:383.0px;width:37.6px">通过</div>
<div class="a btn pri" style="left:1517.3px;top:379.0px;width:69px;height:29px"><div class="a" style="left:15.2px;top:8.2px"><svg width="11" height="12" viewBox="0 0 11 12"><g fill="none" stroke="#fff" stroke-width="1.1" stroke-linejoin="round"><path d="M5.1 1.1L8.3 3 3.6 10.6.9 10.9 1 8.4z"/><path d="M4.8 10.5h5.4"/></g></svg></div><div class="a bt" style="left:32.4px;line-height:29px">编辑</div></div>
<div class="a more hov" style="left:1595.4px;top:379.2px">更多<svg class="a" style="left:43.5px;top:10.8px" width="8" height="5" viewBox="0 0 8 5"><path d="M.5.5L4 4 7.5.5" fill="none" stroke="#409eff" stroke-width="1"/></svg></div>
<div class="a cb" style="left:272px;top:429.1px"></div>
<div class="a td" style="left:304px;width:45px;top:426.0px">23</div>
<div class="a td tdc" style="left:529px;width:179px;top:426.0px">阿超奥斯卡</div>
<div class="a td tdc" style="left:708px;width:180px;top:426.0px">隐私数据</div>
<div class="a td" style="left:888px;width:89px;top:426.0px">1</div>
<div class="a td" style="left:977px;width:180px;top:426.0px">9986.00</div>
<div class="a td" style="left:1157px;width:180px;top:426.0px">2021-07-06 11:40</div>
<div class="a tag ok" style="left:1384.3px;top:426.0px;width:37.6px">通过</div>
<div class="a btn pri" style="left:1517.3px;top:422.0px;width:69px;height:29px"><div class="a" style="left:15.2px;top:8.2px"><svg width="11" height="12" viewBox="0 0 11 12"><g fill="none" stroke="#fff" stroke-width="1.1" stroke-linejoin="round"><path d="M5.1 1.1L8.3 3 3.6 10.6.9 10.9 1 8.4z"/><path d="M4.8 10.5h5.4"/></g></svg></div><div class="a bt" style="left:32.4px;line-height:29px">编辑</div></div>
<div class="a more" style="left:1595.4px;top:422.5px">更多<svg class="a" style="left:43.5px;top:10.8px" width="8" height="5" viewBox="0 0 8 5"><path d="M.5.5L4 4 7.5.5" fill="none" stroke="#606266" stroke-width="1"/></svg></div>
<div class="a cb" style="left:272px;top:472.1px"></div>
<div class="a td" style="left:304px;width:45px;top:469.0px">22</div>
<div class="a td tdc" style="left:529px;width:179px;top:469.0px">赤炎金乌</div>
<div class="a td tdc" style="left:708px;width:180px;top:469.0px">隐私数据</div>
<div class="a td" style="left:888px;width:89px;top:469.0px">0</div>
<div class="a td" style="left:977px;width:180px;top:469.0px">10000.00</div>
<div class="a td" style="left:1157px;width:180px;top:469.0px">2021-06-28 16:42</div>
<div class="a tag ok" style="left:1384.3px;top:469.0px;width:37.6px">通过</div>
<div class="a btn pri" style="left:1517.3px;top:465.0px;width:69px;height:29px"><div class="a" style="left:15.2px;top:8.2px"><svg width="11" height="12" viewBox="0 0 11 12"><g fill="none" stroke="#fff" stroke-width="1.1" stroke-linejoin="round"><path d="M5.1 1.1L8.3 3 3.6 10.6.9 10.9 1 8.4z"/><path d="M4.8 10.5h5.4"/></g></svg></div><div class="a bt" style="left:32.4px;line-height:29px">编辑</div></div>
<div class="a more" style="left:1595.4px;top:465.5px">更多<svg class="a" style="left:43.5px;top:10.8px" width="8" height="5" viewBox="0 0 8 5"><path d="M.5.5L4 4 7.5.5" fill="none" stroke="#606266" stroke-width="1"/></svg></div>
<div class="a cb" style="left:272px;top:515.1px"></div>
<div class="a td" style="left:304px;width:45px;top:512.0px">21</div>
<div class="a td tdc" style="left:529px;width:179px;top:512.0px">新卅思即可</div>
<div class="a td tdc" style="left:708px;width:180px;top:512.0px">隐私数据</div>
<div class="a td" style="left:888px;width:89px;top:512.0px">0</div>
<div class="a td" style="left:977px;width:180px;top:512.0px">10000.00</div>
<div class="a td" style="left:1157px;width:180px;top:512.0px">2021-06-28 16:42</div>
<div class="a tag ok" style="left:1384.3px;top:512.0px;width:37.6px">通过</div>
<div class="a btn pri" style="left:1517.3px;top:508.0px;width:69px;height:29px"><div class="a" style="left:15.2px;top:8.2px"><svg width="11" height="12" viewBox="0 0 11 12"><g fill="none" stroke="#fff" stroke-width="1.1" stroke-linejoin="round"><path d="M5.1 1.1L8.3 3 3.6 10.6.9 10.9 1 8.4z"/><path d="M4.8 10.5h5.4"/></g></svg></div><div class="a bt" style="left:32.4px;line-height:29px">编辑</div></div>
<div class="a more" style="left:1595.4px;top:508.5px">更多<svg class="a" style="left:43.5px;top:10.8px" width="8" height="5" viewBox="0 0 8 5"><path d="M.5.5L4 4 7.5.5" fill="none" stroke="#606266" stroke-width="1"/></svg></div>
<div class="a cb" style="left:272px;top:559.1px"></div>
<div class="a td" style="left:304px;width:45px;top:556px">19</div>
<div class="a td" style="left:529px;width:179px;top:556px">KKK</div>
<div class="a td tdc" style="left:708px;width:180px;top:556px">隐私数据</div>
<div class="a td" style="left:888px;width:89px;top:556px">0</div>
<div class="a td" style="left:977px;width:180px;top:556px">0.00</div>
<div class="a td" style="left:1157px;width:180px;top:556px">2021-06-18 13:20</div>
<div class="a tag wait" style="left:1379px;top:556px;width:48.3px">待审核</div>
<div class="a btn pri" style="left:1517.3px;top:552px;width:69px;height:29px"><div class="a" style="left:15.2px;top:8.2px"><svg width="11" height="12" viewBox="0 0 11 12"><g fill="none" stroke="#fff" stroke-width="1.1" stroke-linejoin="round"><path d="M5.1 1.1L8.3 3 3.6 10.6.9 10.9 1 8.4z"/><path d="M4.8 10.5h5.4"/></g></svg></div><div class="a bt" style="left:32.4px;line-height:29px">编辑</div></div>
<div class="a more" style="left:1595.4px;top:552.5px">更多<svg class="a" style="left:43.5px;top:10.8px" width="8" height="5" viewBox="0 0 8 5"><path d="M.5.5L4 4 7.5.5" fill="none" stroke="#606266" stroke-width="1"/></svg></div>
<div class="a cb" style="left:272px;top:602.1px"></div>
<div class="a td" style="left:304px;width:45px;top:599px">18</div>
<div class="a td tdc" style="left:529px;width:179px;top:599px">码科</div>
<div class="a td tdc" style="left:708px;width:180px;top:599px">隐私数据</div>
<div class="a td" style="left:888px;width:89px;top:599px">4</div>
<div class="a td" style="left:977px;width:180px;top:599px">9962.00</div>
<div class="a td" style="left:1157px;width:180px;top:599px">2021-06-16 15:15</div>
<div class="a tag ok" style="left:1384.3px;top:599px;width:37.6px">通过</div>
<div class="a btn pri" style="left:1517.3px;top:595px;width:69px;height:29px"><div class="a" style="left:15.2px;top:8.2px"><svg width="11" height="12" viewBox="0 0 11 12"><g fill="none" stroke="#fff" stroke-width="1.1" stroke-linejoin="round"><path d="M5.1 1.1L8.3 3 3.6 10.6.9 10.9 1 8.4z"/><path d="M4.8 10.5h5.4"/></g></svg></div><div class="a bt" style="left:32.4px;line-height:29px">编辑</div></div>
<div class="a more" style="left:1595.4px;top:595.5px">更多<svg class="a" style="left:43.5px;top:10.8px" width="8" height="5" viewBox="0 0 8 5"><path d="M.5.5L4 4 7.5.5" fill="none" stroke="#606266" stroke-width="1"/></svg></div>
<div class="a cb" style="left:272px;top:645.1px"></div>
<div class="a td" style="left:304px;width:45px;top:642px">17</div>
<div class="a td tdc" style="left:529px;width:179px;top:642px">黔特</div>
<div class="a td tdc" style="left:708px;width:180px;top:642px">隐私数据</div>
<div class="a td" style="left:888px;width:89px;top:642px">0</div>
<div class="a td" style="left:977px;width:180px;top:642px">0.00</div>
<div class="a td" style="left:1157px;width:180px;top:642px">2021-06-11 18:04</div>
<div class="a tag ok" style="left:1384.3px;top:642px;width:37.6px">通过</div>
<div class="a btn pri" style="left:1517.3px;top:638px;width:69px;height:29px"><div class="a" style="left:15.2px;top:8.2px"><svg width="11" height="12" viewBox="0 0 11 12"><g fill="none" stroke="#fff" stroke-width="1.1" stroke-linejoin="round"><path d="M5.1 1.1L8.3 3 3.6 10.6.9 10.9 1 8.4z"/><path d="M4.8 10.5h5.4"/></g></svg></div><div class="a bt" style="left:32.4px;line-height:29px">编辑</div></div>
<div class="a more" style="left:1595.4px;top:638.5px">更多<svg class="a" style="left:43.5px;top:10.8px" width="8" height="5" viewBox="0 0 8 5"><path d="M.5.5L4 4 7.5.5" fill="none" stroke="#606266" stroke-width="1"/></svg></div>
<div class="a cb" style="left:272px;top:688.1px"></div>
<div class="a td" style="left:304px;width:45px;top:685px">16</div>
<div class="a td tdc" style="left:529px;width:179px;top:685px">星邻送跑腿</div>
<div class="a td tdc" style="left:708px;width:180px;top:685px">隐私数据</div>
<div class="a td" style="left:888px;width:89px;top:685px">0</div>
<div class="a td" style="left:977px;width:180px;top:685px">0.00</div>
<div class="a td" style="left:1157px;width:180px;top:685px">2021-06-08 15:54</div>
<div class="a tag wait" style="left:1379px;top:685px;width:48.3px">待审核</div>
<div class="a btn pri" style="left:1517.3px;top:681px;width:69px;height:29px"><div class="a" style="left:15.2px;top:8.2px"><svg width="11" height="12" viewBox="0 0 11 12"><g fill="none" stroke="#fff" stroke-width="1.1" stroke-linejoin="round"><path d="M5.1 1.1L8.3 3 3.6 10.6.9 10.9 1 8.4z"/><path d="M4.8 10.5h5.4"/></g></svg></div><div class="a bt" style="left:32.4px;line-height:29px">编辑</div></div>
<div class="a more" style="left:1595.4px;top:681.5px">更多<svg class="a" style="left:43.5px;top:10.8px" width="8" height="5" viewBox="0 0 8 5"><path d="M.5.5L4 4 7.5.5" fill="none" stroke="#606266" stroke-width="1"/></svg></div>
<div class="a cb" style="left:272px;top:731.1px"></div>
<div class="a td" style="left:304px;width:45px;top:728px">15</div>
<div class="a td tdc" style="left:529px;width:179px;top:728px">码科</div>
<div class="a td tdc" style="left:708px;width:180px;top:728px">隐私数据</div>
<div class="a td" style="left:888px;width:89px;top:728px">1</div>
<div class="a td" style="left:977px;width:180px;top:728px">590.00</div>
<div class="a td" style="left:1157px;width:180px;top:728px">2021-06-07 09:24</div>
<div class="a tag ok" style="left:1384.3px;top:728px;width:37.6px">通过</div>
<div class="a btn pri" style="left:1517.3px;top:724px;width:69px;height:29px"><div class="a" style="left:15.2px;top:8.2px"><svg width="11" height="12" viewBox="0 0 11 12"><g fill="none" stroke="#fff" stroke-width="1.1" stroke-linejoin="round"><path d="M5.1 1.1L8.3 3 3.6 10.6.9 10.9 1 8.4z"/><path d="M4.8 10.5h5.4"/></g></svg></div><div class="a bt" style="left:32.4px;line-height:29px">编辑</div></div>
<div class="a more" style="left:1595.4px;top:724.5px">更多<svg class="a" style="left:43.5px;top:10.8px" width="8" height="5" viewBox="0 0 8 5"><path d="M.5.5L4 4 7.5.5" fill="none" stroke="#606266" stroke-width="1"/></svg></div>
</div>
<div id="cc2" class="a" style="left:0;top:0">
<div class="a" style="left:401px;top:333px;width:79px;height:24px;background:#f8f8f8;border-radius:12px"></div>
<div class="a" style="left:401px;top:346px;width:79px;height:11px;background:#f2c8c8;border-radius:0 0 12px 12px"></div>
<div class="a" style="left:412px;top:335px;width:60px;height:11px;background:#efefef;"></div>
<div class="a" style="left:412px;top:346px;width:12px;height:11px;background:#d7a9a9;"></div>
<div class="a" style="left:424px;top:346px;width:12px;height:11px;background:#d6a6a6;"></div>
<div class="a" style="left:436px;top:346px;width:12px;height:11px;background:#d8aeae;"></div>
<div class="a" style="left:448px;top:346px;width:12px;height:11px;background:#d2a0a0;"></div>
<div class="a" style="left:460px;top:346px;width:12px;height:11px;background:#d9aeae;"></div>
<div class="a" style="left:424px;top:383px;width:12px;height:12px;background:#d9dbdf;"></div>
<div class="a" style="left:436px;top:383px;width:12px;height:12px;background:#d5d8dc;"></div>
<div class="a" style="left:448px;top:383px;width:12px;height:12px;background:#e6e9ed;"></div>
<div class="a" style="left:424px;top:395px;width:36px;height:7px;background:#eceef2;"></div>
<div class="a" style="left:416px;top:431px;width:8px;height:12px;background:#eeeeee;border-radius:6px 0 0 6px"></div>
<div class="a" style="left:424px;top:431px;width:12px;height:12px;background:#c8c8c9;"></div>
<div class="a" style="left:436px;top:431px;width:12px;height:12px;background:#c2c2c3;"></div>
<div class="a" style="left:448px;top:431px;width:12px;height:12px;background:#c6c7c9;"></div>
<div class="a" style="left:412px;top:467px;width:12px;height:12px;background:#e4e4e4;"></div>
<div class="a" style="left:424px;top:467px;width:12px;height:12px;background:#e6e6e6;"></div>
<div class="a" style="left:436px;top:467px;width:12px;height:12px;background:#e2e2e2;"></div>
<div class="a" style="left:448px;top:467px;width:12px;height:12px;background:#e6e6e6;"></div>
<div class="a" style="left:460px;top:467px;width:12px;height:12px;background:#efefef;"></div>
<div class="a" style="left:412px;top:479px;width:24px;height:11px;background:#eaeaea;"></div>
<div class="a" style="left:436px;top:479px;width:24px;height:12px;background:#e6e6e6;"></div>
<div class="a" style="left:460px;top:479px;width:12px;height:12px;background:#f0f0f0;"></div>
<div class="a" style="left:400px;top:514px;width:12px;height:12px;background:#e2e2e2;"></div>
<div class="a" style="left:412px;top:514px;width:12px;height:12px;background:#e0e0e0;"></div>
<div class="a" style="left:424px;top:514px;width:12px;height:12px;background:#cdcdcd;"></div>
<div class="a" style="left:436px;top:514px;width:12px;height:12px;background:#c7c7c7;"></div>
<div class="a" style="left:448px;top:514px;width:12px;height:12px;background:#cbcbcb;"></div>
<div class="a" style="left:460px;top:514px;width:12px;height:12px;background:#d5d5d5;"></div>
<div class="a" style="left:412px;top:554px;width:48px;height:9px;background:#efefef;"></div>
<div class="a" style="left:412px;top:563px;width:12px;height:12px;background:#d8d8d8;"></div>
<div class="a" style="left:424px;top:563px;width:12px;height:12px;background:#cfcfcf;"></div>
<div class="a" style="left:436px;top:563px;width:12px;height:12px;background:#dedede;"></div>
<div class="a" style="left:448px;top:563px;width:12px;height:12px;background:#d6d6d6;"></div>
<div class="a" style="left:460px;top:560px;width:6px;height:15px;background:#eeeeee;border-radius:0 6px 6px 0"></div>
<div class="a" style="left:424px;top:599px;width:24px;height:12px;background:#cbcbcb;"></div>
<div class="a" style="left:448px;top:599px;width:12px;height:12px;background:#eceef0;"></div>
<div class="a" style="left:424px;top:611px;width:36px;height:12px;background:#f2f2f2;"></div>
<div class="a" style="left:412px;top:646px;width:12px;height:12px;background:#eeeeee;"></div>
<div class="a" style="left:424px;top:646px;width:12px;height:12px;background:#cbcbcb;"></div>
<div class="a" style="left:436px;top:646px;width:22px;height:12px;background:#cbcccd;"></div>
<div class="a" style="left:412px;top:683px;width:12px;height:12px;background:#dcdcdc;"></div>
<div class="a" style="left:424px;top:683px;width:12px;height:12px;background:#e2e2e2;"></div>
<div class="a" style="left:436px;top:683px;width:12px;height:12px;background:#e6e6e8;"></div>
<div class="a" style="left:448px;top:683px;width:17px;height:12px;background:#dedede;border-radius:0 10px 0 0"></div>
<div class="a" style="left:412px;top:695px;width:12px;height:12px;background:#e2e2e2;"></div>
<div class="a" style="left:424px;top:695px;width:12px;height:12px;background:#eaeaea;"></div>
<div class="a" style="left:436px;top:695px;width:12px;height:12px;background:#e2e2e2;"></div>
<div class="a" style="left:448px;top:695px;width:17px;height:12px;background:#e4e4e4;border-radius:0 0 10px 0"></div>
<div class="a" style="left:424px;top:731px;width:12px;height:12px;background:#cbcbcb;"></div>
<div class="a" style="left:436px;top:731px;width:12px;height:12px;background:#c2c2c2;"></div>
<div class="a" style="left:448px;top:731px;width:12px;height:12px;background:#e6e6e6;"></div>
<div class="a" style="left:1469px;top:752px;width:234px;height:7px;background:#fcfcfc;border-top:1px solid #ebeef5"></div>
<div class="a" style="left:1600.7px;top:418.3px;width:63.5px;height:180.5px;background:#fff;border:1px solid #eef0f4;border-radius:2px;box-shadow:0 2px 8px rgba(0,0,0,.07)"></div><div class="a" style="left:1620px;top:416.5px;width:8px;height:3px;background:#fff"></div>
<div class="a dd" style="left:1614px;top:427.5px">计费</div>
<div class="a dd" style="left:1614px;top:451.7px">店铺</div>
<div class="a dd" style="left:1614px;top:475.9px">店员</div>
<div class="a dd" style="left:1614px;top:500.1px">接单员</div>
<div class="a dd" style="left:1614px;top:524.3px">对接</div>
<div class="a dd" style="left:1614px;top:548.5px">详情</div>
<div class="a dd" style="left:1614px;top:572.7px">删除</div>
<div class="a" style="left:253px;top:357px;width:1429px;height:60px;border:3px solid #fe1d1d;border-radius:3px"></div>
<div class="a" style="left:1601px;top:446px;width:46px;height:25px;border:3px solid #fe1d1d;border-radius:3px"></div>
<div class="a" style="left:1605px;top:519px;width:39px;height:26px;border:3px solid #fe1d1d;border-radius:3px"></div>
<div class="a pg" style="left:748px;top:775px">共 22 条</div>
<div class="a" style="left:804.5px;top:771px;width:89px;height:25px;border:1px solid #dcdfe6;border-radius:3px"></div>
<div class="a pg" style="left:822.5px;top:775px">10条/页</div>
<svg class="a" style="left:878px;top:781px" width="8" height="5" viewBox="0 0 8 5"><path d="M.5.5L4 4 7.5.5" fill="none" stroke="#c0c4cc" stroke-width="1"/></svg>
<div class="a pgb" style="left:930px;background:#f4f4f5;color:#606266"></div>
<div class="a pgb" style="left:966.2px;background:#1890ff;color:#fff">1</div>
<div class="a pgb" style="left:1001.9px;background:#f4f4f5;color:#606266">2</div>
<div class="a pgb" style="left:1037.8px;background:#f4f4f5;color:#606266">3</div>
<div class="a pgb" style="left:1073.8px;background:#f4f4f5;color:#606266"></div>
<svg class="a" style="left:940px;top:778px" width="6" height="10" viewBox="0 0 6 10"><path d="M5.3.6L1 5l4.3 4.4" fill="none" stroke="#c0c4cc" stroke-width="1.2"/></svg>
<svg class="a" style="left:1084px;top:778px" width="6" height="10" viewBox="0 0 6 10"><path d="M.7.6L5 5 .7 9.4" fill="none" stroke="#303133" stroke-width="1.2"/></svg>
<div class="a pg" style="left:1127px;top:775px">前往</div>
<div class="a" style="left:1154px;top:771px;width:41px;height:25px;border:1px solid #dcdfe6;border-radius:3px;text-align:center;font-size:12.5px;line-height:23px;color:#606266">1</div>
<div class="a pg" style="left:1198.5px;top:775px">页</div>
</div>
</body></html>
